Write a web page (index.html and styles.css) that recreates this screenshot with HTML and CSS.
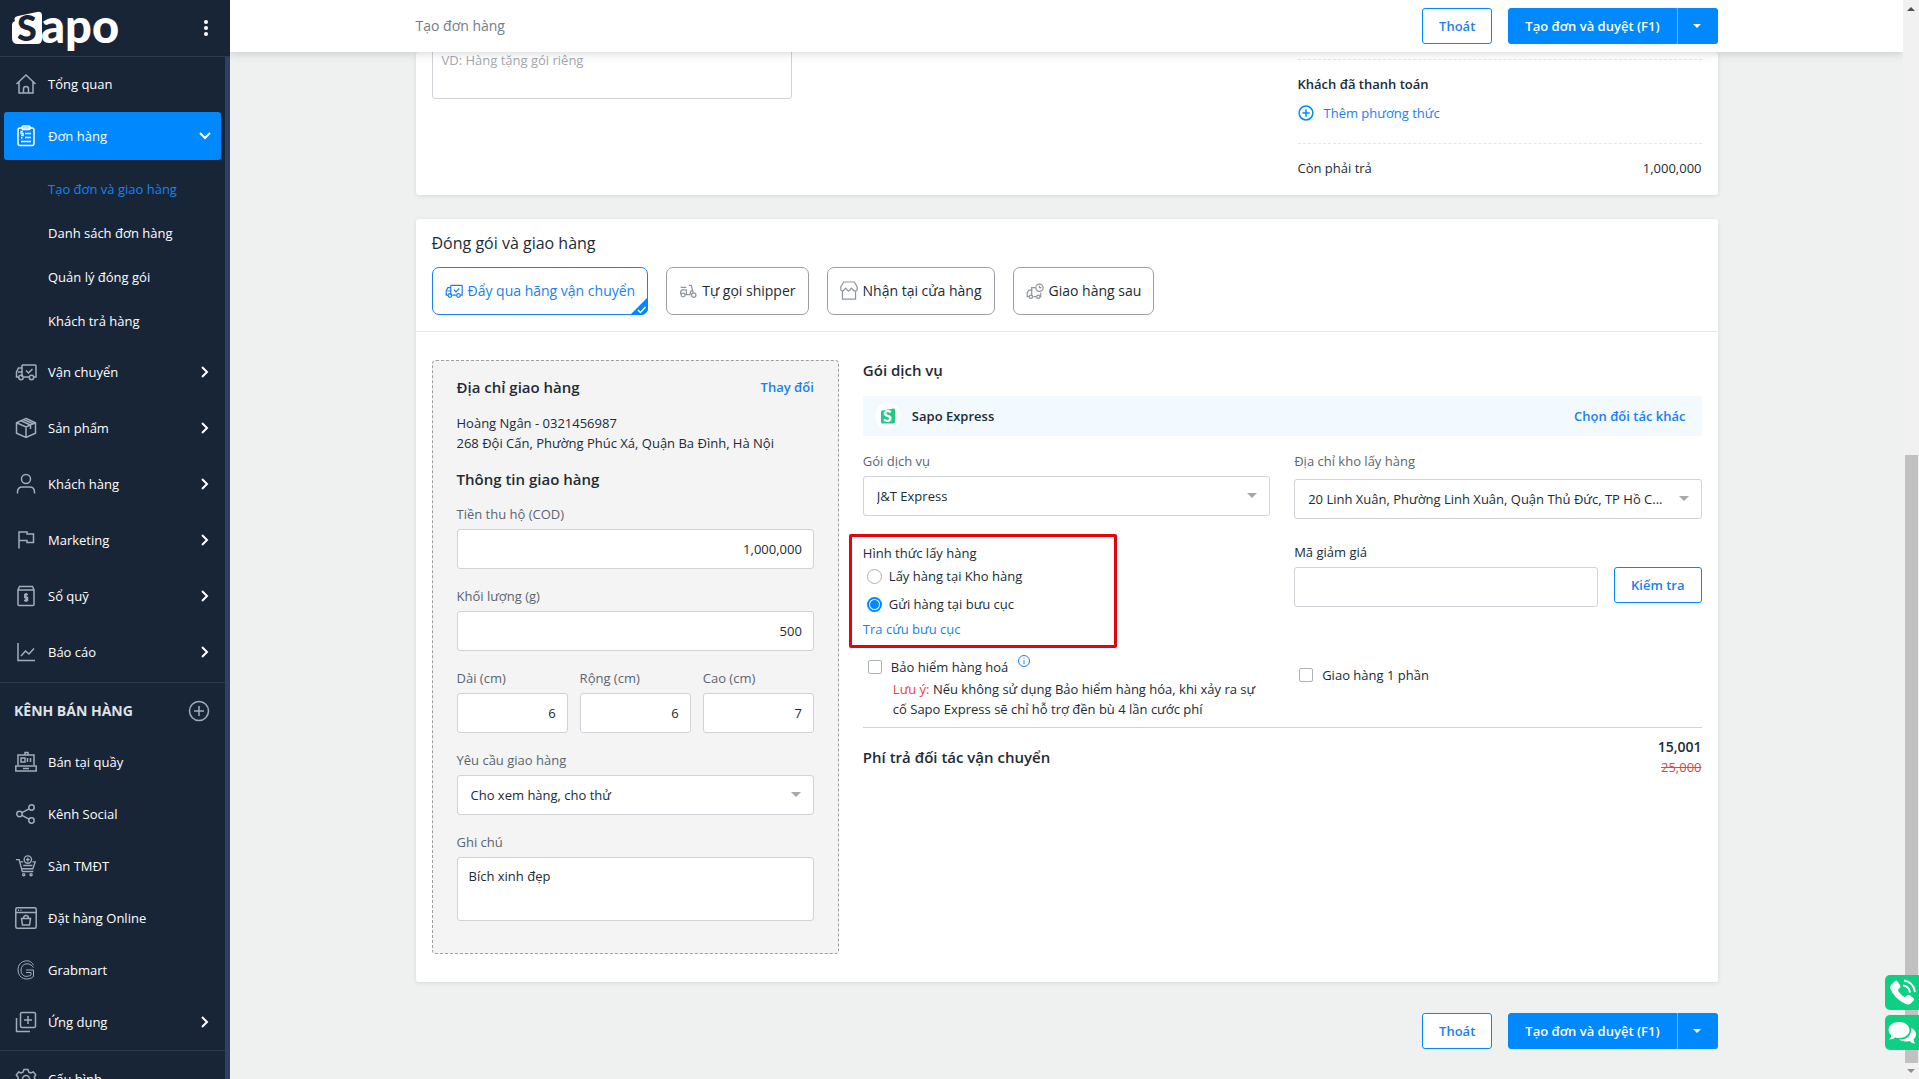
FILE: index.html
```html
<!DOCTYPE html>
<html lang="vi">
<head>
<meta charset="utf-8">
<meta name="viewport" content="width=device-width, initial-scale=1">
<title>Tạo đơn hàng - Sapo</title>
<link rel="stylesheet" href="styles.css">
</head>
<body>
<svg class="sprite" aria-hidden="true">
  <symbol id="truck" viewBox="0 0 22 22"><path d="M7 4h13a1 1 0 0 1 1 1v11h-2M14 16H9M7 4v12M7 7H3.500L1.500 11v5h2.200M3 11h4M11 9.500l2.500 2.500 4-4"/><circle cx="6" cy="16.500" r="2.200"/><circle cx="16.500" cy="16.500" r="2.200"/></symbol>
  <symbol id="chevron" viewBox="0 0 12 12"><path d="M3 1l5 5-5 5"/></symbol>
  <symbol id="plus-circle" viewBox="0 0 22 22"><circle cx="11" cy="11" r="9.500"/><path d="M11 6v10M6 11h10"/></symbol>
</svg>
<div class="app">
  <aside class="sidebar">
    <div class="brand">
      <svg class="logo" viewBox="0 0 110 42" role="img" aria-label="Sapo">
        <path class="logo-box" d="M3 10Q1 6 6 5L25 1Q30 0 30 5V28Q30 33 25 33H6Q0 33 0 27V14Q0 11 3 10Z"/>
        <text class="logo-s" x="5" y="30">S</text>
        <text class="logo-rest" x="29" y="32">apo</text>
      </svg>
      <button class="more" aria-label="Menu"><svg viewBox="0 0 6 18"><circle cx="3" cy="3" r="2"/><circle cx="3" cy="9" r="2"/><circle cx="3" cy="15" r="2"/></svg></button>
    </div>
    <nav class="menu">
      <a class="item" href="#"><svg class="icon" viewBox="0 0 22 22"><path d="M1.500 11L11 2l9.500 9M4 9v11h14V9M8.500 20v-4a2.500 2.500 0 0 1 5 0v4"/></svg>Tổng quan</a>
      <a class="item active" href="#"><svg class="icon" viewBox="0 0 22 22"><rect x="3" y="3" width="16" height="17.500" rx="2"/><rect x="7" y="1" width="8" height="3.500" rx="1"/><path d="M10 8.500h6M10 12.500h6M6 16.500h10M8 6.500H6.200v2H8v2H6M6 13h1.500"/></svg>Đơn hàng<svg class="arrow down"><use href="#chevron"/></svg></a>
      <div class="submenu">
        <a class="current" href="#">Tạo đơn và giao hàng</a>
        <a href="#">Danh sách đơn hàng</a>
        <a href="#">Quản lý đóng gói</a>
        <a href="#">Khách trả hàng</a>
      </div>
      <a class="item tall" href="#"><svg class="icon"><use href="#truck"/></svg>Vận chuyển<svg class="arrow"><use href="#chevron"/></svg></a>
      <a class="item tall" href="#"><svg class="icon" viewBox="0 0 22 22"><path d="M11 1.500l9.500 4.200v10.600L11 20.500l-9.500-4.200V5.700zM1.500 5.700L11 10l9.500-4.300M11 10v10.500M6 3.700L15.500 8v4M8.500 2.600L18 6.800"/></svg>Sản phẩm<svg class="arrow"><use href="#chevron"/></svg></a>
      <a class="item tall" href="#"><svg class="icon" viewBox="0 0 22 22"><circle cx="11" cy="6" r="4.500"/><path d="M2.500 20.500v-1.500c0-3.500 2.500-5 5-5h7c2.500 0 5 1.500 5 5v1.500"/></svg>Khách hàng<svg class="arrow"><use href="#chevron"/></svg></a>
      <a class="item tall" href="#"><svg class="icon" viewBox="0 0 22 22"><path d="M4 19.500V3h8v2h6.500v8.500H12v-2H4"/></svg>Marketing<svg class="arrow"><use href="#chevron"/></svg></a>
      <a class="item tall" href="#"><svg class="icon" viewBox="0 0 22 22"><path d="M3 5v14.500q0 1 1 1h14q1 0 1-1V5zM3 5l1.500-3.500h13L19 5M13 9.500h-3.200v3h2.700v3H9M11 8v9"/></svg>Sổ quỹ<svg class="arrow"><use href="#chevron"/></svg></a>
      <a class="item tall" href="#"><svg class="icon" viewBox="0 0 22 22"><path d="M3 2v17.500h17M6 15l4.500-5 3.500 3 5-5.500"/></svg>Báo cáo<svg class="arrow"><use href="#chevron"/></svg></a>
      <div class="section"><h2>KÊNH BÁN HÀNG</h2><button class="add" aria-label="Thêm kênh"><svg class="icon"><use href="#plus-circle"/></svg></button></div>
      <a class="item" href="#"><svg class="icon" viewBox="0 0 22 22"><path d="M3 14V4h16v10M.800 15h20.400v5H.800zM8 17.500h6M6 7h4v4H6zM12.500 7v4M15.500 7v4M10 1.500h3V4h-3z"/></svg>Bán tại quầy</a>
      <a class="item" href="#"><svg class="icon" viewBox="0 0 22 22"><circle cx="4.500" cy="11" r="2.700"/><circle cx="16.500" cy="4.500" r="2.700"/><circle cx="16.500" cy="17.500" r="2.700"/><path d="M7 9.700l7-3.800M7 12.300l7 3.800"/></svg>Kênh Social</a>
      <a class="item" href="#"><svg class="icon" viewBox="0 0 22 24"><path d="M0 5h3.500L7 18h12M4.500 7.500H8M18 7.500h3L18.500 15H6M8 11.500h10"/><circle cx="13" cy="5" r="4"/><path d="M13 3v4M11 5h4"/><circle cx="8.500" cy="21.500" r="1.200"/><circle cx="16.500" cy="21.500" r="1.200"/></svg>Sàn TMĐT</a>
      <a class="item" href="#"><svg class="icon" viewBox="0 0 22 22"><rect x=".800" y=".800" width="20.400" height="20.400" rx="1.500"/><path d="M1 5.500h20M3 3.200h1M5.500 3.200h1M6.500 11.500h9l-1 6.500h-7zM8.500 11.500c0-4 5-4 5 0"/></svg>Đặt hàng Online</a>
      <a class="item" href="#"><svg class="icon thin" viewBox="0 0 22 22"><path d="M18.500 6C16 1.500 12 1.500 10.500 2 6 2.500 3 6 3 11c0 9 10 11.500 15.500 6.500V11H11M18.500 8.500C15 3 6.500 3.500 6 11c0 7 6 7.500 10 5v-2.500h-5"/></svg>Grabmart</a>
      <a class="item" href="#"><svg class="icon" viewBox="0 0 22 22"><rect x="5.500" y="1.500" width="15" height="15" rx="1.500"/><path d="M13 5v8M9 9h8M1.500 7v13.500H15"/></svg>Ứng dụng<svg class="arrow"><use href="#chevron"/></svg></a>
      <div class="rule"></div>
      <a class="item" href="#"><svg class="icon" viewBox="0 0 22 22"><path d="M9 1.500h4l.800 2.600 2 .900 2.500-1.100 2.400 3-1.300 2.300.600 2.300 1.500 1-1.500 4-3 .300-1.500 1.600-.500 2.600H8l-.800-2.600-2-1.400-3 .300L1 13.500l2-1.800V9.300L1.300 7l2.400-3L6 5l2-.900z"/><circle cx="11" cy="11" r="3.500"/></svg>Cấu hình</a>
    </nav>
  </aside>

  <div class="page">
    <header class="topbar">
      <div class="container bar">
        <h1>Tạo đơn hàng</h1>
        <div class="actions">
          <button class="btn outline">Thoát</button>
          <div class="split"><button class="btn primary">Tạo đơn và duyệt (F1)</button><button class="btn primary caret" aria-label="Thêm lựa chọn"></button></div>
        </div>
      </div>
    </header>

    <main class="container">
      <section class="card summary">
        <textarea class="order-note" aria-label="Ghi chú đơn hàng" placeholder="VD: Hàng tặng gói riêng"></textarea>
        <div class="totals">
          <div class="paid">
            <strong>Khách đã thanh toán</strong>
            <a class="add-method" href="#"><svg class="icon"><use href="#plus-circle"/></svg>Thêm phương thức</a>
          </div>
          <div class="due"><span>Còn phải trả</span><span>1,000,000</span></div>
        </div>
      </section>

      <section class="card shipping">
        <div class="shipping-head">
          <h2>Đóng gói và giao hàng</h2>
          <div class="methods">
            <button class="method selected"><svg class="icon"><use href="#truck"/></svg>Đẩy qua hãng vận chuyển<svg class="corner" viewBox="0 0 18 18"><path class="corner-fill" d="M18 0v18H0z"/><path class="corner-tick" d="M8 13l2.500 2.500L15.500 10"/></svg></button>
            <button class="method"><svg class="icon" viewBox="0 0 22 22"><path d="M2 6.500h7M3 9.500h6v6H7.500M2 15v-2c0-2 1-3.500 3-3.500M9 15.500h4.500c0-3 1.500-5 3-5.500L15 4h-3M16.500 10l1 3"/><circle cx="5" cy="16" r="2.300"/><circle cx="18" cy="16" r="2.700"/></svg>Tự gọi shipper</button>
            <button class="method"><svg class="icon" viewBox="0 0 22 22"><path d="M4.500 0h13L21 6v3q0 2-2.500 2-2 0-2.500-1.500l-2-2-2 2.500-1.500 1L9 10 7 7.500l-2 2Q4.500 11 3 11 1 11 1 9V6zM3 11v10h16V11"/></svg>Nhận tại cửa hàng</button>
            <button class="method"><svg class="icon" viewBox="0 0 22 22"><path d="M11 7H7v10M7 10H3.500l-2 3v5h2M9 18h4M17 18h1v-5"/><circle cx="6" cy="18" r="2"/><circle cx="15" cy="18" r="2"/><circle cx="16.500" cy="7" r="4.500"/><path d="M16.500 4.500V7H19"/></svg>Giao hàng sau</button>
          </div>
        </div>
        <div class="shipping-body">
          <div class="delivery">
            <div class="delivery-head"><h3>Địa chỉ giao hàng</h3><a href="#">Thay đổi</a></div>
            <p class="address">Hoàng Ngân - 0321456987<br>268 Đội Cấn, Phường Phúc Xá, Quận Ba Đình, Hà Nội</p>
            <h3 class="info-title">Thông tin giao hàng</h3>
            <div class="fields">
              <div class="field"><label for="cod">Tiền thu hộ (COD)</label><input id="cod" class="control number" value="1,000,000"></div>
              <div class="field"><label for="weight">Khối lượng (g)</label><input id="weight" class="control number" value="500"></div>
              <div class="sizes">
                <div class="field"><label for="len">Dài (cm)</label><input id="len" class="control number" value="6"></div>
                <div class="field"><label for="wid">Rộng (cm)</label><input id="wid" class="control number" value="6"></div>
                <div class="field"><label for="hei">Cao (cm)</label><input id="hei" class="control number" value="7"></div>
              </div>
              <div class="field"><label for="req">Yêu cầu giao hàng</label><div class="select"><select id="req" class="control"><option>Cho xem hàng, cho thử</option></select></div></div>
              <div class="field"><label for="note">Ghi chú</label><textarea id="note" class="control note">Bích xinh đẹp</textarea></div>
            </div>
          </div>

          <div class="service">
            <h3>Gói dịch vụ</h3>
            <div class="partner">
              <span class="partner-logo"><svg viewBox="0 0 14 16" aria-hidden="true"><path d="M1 2.500L13 .500q1 0 1 1V14q0 1.500-1.500 1.500h-11Q0 15.500 0 14V4q0-1.200 1-1.500z"/><text x="2" y="14">S</text></svg></span>
              <strong>Sapo Express</strong><a href="#">Chọn đối tác khác</a>
            </div>
            <div class="columns">
              <div class="left">
                <div class="field"><label for="pack">Gói dịch vụ</label><div class="select"><select id="pack" class="control"><option>J&amp;T Express</option></select></div></div>
                <fieldset class="pickup">
                  <legend>Hình thức lấy hàng</legend>
                  <label class="choice"><input type="radio" name="pickup">Lấy hàng tại Kho hàng</label>
                  <label class="choice"><input type="radio" name="pickup" checked>Gửi hàng tại bưu cục</label>
                  <a href="#">Tra cứu bưu cục</a>
                </fieldset>
                <label class="choice tick"><input type="checkbox">Bảo hiểm hàng hoá<svg class="info" viewBox="0 0 14 14"><circle cx="7" cy="7" r="5.500"/><path d="M7 6v4M7 3.700v1"/></svg></label>
                <p class="hint"><em>Lưu ý:</em> Nếu không sử dụng Bảo hiểm hàng hóa, khi xảy ra sự cố Sapo Express sẽ chỉ hỗ trợ đền bù 4 lần cước phí</p>
              </div>
              <div class="right">
                <div class="field warehouse"><label for="stock">Địa chỉ kho lấy hàng</label><div class="select"><select id="stock" class="control"><option>20 Linh Xuân, Phường Linh Xuân, Quận Thủ Đức, TP Hồ C...</option></select></div></div>
                <div class="field coupon"><label for="code">Mã giảm giá</label><div class="coupon-row"><input id="code" class="control"><button class="btn outline">Kiểm tra</button></div></div>
                <label class="choice tick partial"><input type="checkbox">Giao hàng 1 phần</label>
              </div>
            </div>
            <div class="fee"><h3>Phí trả đối tác vận chuyển</h3><div class="amounts"><strong>15,001</strong><del>25,000</del></div></div>
          </div>
        </div>
      </section>

      <div class="actions bottom">
        <button class="btn outline">Thoát</button>
        <div class="split"><button class="btn primary">Tạo đơn và duyệt (F1)</button><button class="btn primary caret" aria-label="Thêm lựa chọn"></button></div>
      </div>
    </main>
  </div>
  <div class="scrollbar" aria-hidden="true"><i class="up"></i><i class="thumb"></i><i class="dn"></i></div>
</div>
<div class="contact">
  <button aria-label="Gọi điện"><svg viewBox="0 0 28 28"><path class="solid" d="M4 5l3-3q1.500-1 2.600.500l2.600 4q.800 1.500-.700 2.800L9.800 11q2.500 5 7.200 7.300l1.800-1.700q1.300-1.300 2.800-.400l3.800 2.700q1.500 1.200.300 2.600l-3 3q-2 2-6 0Q6 19 2.500 10 1.500 7 4 5z"/><path d="M15 6.500q6 .500 7 7M16 1.500q9.500 1.500 11 11.500"/></svg></button>
  <button aria-label="Trò chuyện"><svg viewBox="0 0 28 28"><path class="solid" d="M11 3c6 0 10.500 3.300 10.500 8S17 19 11 19q-2 0-3.800-.600Q5 20.500 1 20.500q2.500-2 2.300-4Q.500 14 .500 11C.500 6.300 5 3 11 3zM23.500 9q4.500 2.500 4.500 6.500 0 3-2.500 5 0 2 2 4-4 0-6-2.500-6.500 1.500-10.500-1.500 12 .500 12.500-11.500z"/></svg></button>
</div>
</body>
</html>
```

FILE: styles.css
```css
* { box-sizing: border-box; }
body {
  margin: 0;
  background: #eff1f1;
  color: #212b36;
  font: 13px/20px "Open Sans", "Noto Sans", sans-serif;
}
h1, h2, h3, p { margin: 0; }
h3 { font-size: 15px; font-weight: 600; }
a { color: #1a7ff0; text-decoration: none; }
button, input, select, textarea { font: inherit; color: inherit; }
button { cursor: pointer; }
strong { font-weight: 600; }
.sprite { position: absolute; width: 0; height: 0; }
.icon { flex: none; width: 22px; height: 22px; fill: none; stroke: #a3adb9; stroke-width: 1.5; overflow: visible; }
.thin { stroke-width: 1; }

.app { display: flex; height: 100vh; overflow: hidden; }

/* sidebar */
.sidebar { flex: none; width: 230px; background: #182537; display: flex; flex-direction: column; }
.brand { flex: none; display: flex; justify-content: space-between; align-items: center; height: 57px; padding: 0 19px 0 12px; border-bottom: 1px solid #2c3a4d; }
.logo { width: 110px; height: 42px; margin-top: 8px; fill: #fff; font-family: Lato, sans-serif; font-weight: 900; overflow: visible; }
.logo-s { fill: #182537; font-size: 36px; }
.logo-rest { font-size: 47px; }
.more { width: 10px; height: 20px; padding: 0; border: 0; background: none; }
.more svg { display: block; width: 6px; height: 18px; margin: 0 auto; fill: #fff; }
.menu { flex: 1; min-height: 0; overflow: hidden; padding-top: 3px; border-right: 5px solid #2f4160; color: #fff; }
.item { display: flex; align-items: center; gap: 11px; height: 48px; margin: 0 4px 4px; padding: 0 10px 0 11px; border-radius: 3px; color: #fff; }
.item.tall { height: 56px; margin-bottom: 0; }
.active { background: #08f; }
.active .icon { stroke: #fff; }
.arrow { width: 12px; height: 12px; margin-left: auto; fill: none; stroke: #fff; stroke-width: 2; overflow: visible; }
.arrow.down { transform: rotate(90deg); }
.submenu { padding: 3px 0 1px; }
.submenu a { display: block; padding: 12px 0 12px 48px; color: #fff; }
.submenu .current { color: #1683f5; }
.section { display: flex; align-items: center; justify-content: space-between; height: 56px; margin-top: 2px; padding: 0 15px 0 14px; border-top: 1px solid #2c3a4d; }
.section h2 { font-size: 14px; font-weight: 700; color: #dfe3e8; }
.add { width: 22px; height: 22px; padding: 0; border: 0; background: none; }
.rule { border-top: 1px solid #2c3a4d; margin-bottom: 4px; }

/* page frame */
.page { flex: 1; min-width: 0; overflow: hidden; }
.container { max-width: 1334px; margin: 0 auto; padding: 0 16px; }
.topbar { position: relative; z-index: 2; background: #fff; box-shadow: 0 2px 8px rgba(0, 0, 0, .15); }
.bar { display: flex; align-items: center; justify-content: space-between; height: 52px; }
.bar h1 { font-size: 14px; font-weight: 500; color: #747c87; }
.actions { display: flex; justify-content: flex-end; gap: 16px; }
.btn { height: 36px; padding: 0 16px; border: 1px solid #08f; border-radius: 3px; font-weight: 600; white-space: nowrap; }
.outline { background: #fff; color: #1a7ff0; }
.primary { background: #08f; color: #fff; }
.split { display: flex; }
.split .btn:first-child { border-radius: 3px 0 0 3px; }
.split .caret { width: 41px; border-left-color: #6bb9ff; border-radius: 0 3px 3px 0; display: flex; align-items: center; justify-content: center; }
.caret::after { content: ""; border: 4px solid transparent; border-top-color: currentColor; border-bottom: 0; }
.bottom { margin-top: 31px; }

.card { background: #fff; border-radius: 3px; box-shadow: 0 1px 4px rgba(0, 0, 0, .1); }

/* order summary */
.summary { display: flex; justify-content: space-between; padding: 7px 16px 17px; margin-bottom: 24px; }
.order-note { width: 360px; height: 64px; margin-top: -24px; padding: 14px 9px; border: 1px solid #cfd3d7; border-radius: 3px; resize: none; }
.order-note::placeholder { color: #a0a7b0; }
.totals { width: 404px; }
.paid { display: flex; flex-direction: column; gap: 9px; padding: 14px 0 20px; border: dashed #e3e5e8; border-width: 1px 0; }
.add-method { display: flex; align-items: center; gap: 10px; }
.add-method .icon { width: 16px; height: 16px; stroke: #08f; stroke-width: 2; }
.due { display: flex; justify-content: space-between; padding-top: 14px; }

/* shipping */
.shipping-head { padding: 12px 16px 16px; border-bottom: 1px solid #e4e6e8; }
.shipping-head h2 { margin-bottom: 12px; font-size: 16px; line-height: 24px; font-weight: 400; }
.methods { display: flex; flex-wrap: wrap; gap: 18px; }
.method { position: relative; display: flex; align-items: center; gap: 5px; height: 48px; padding: 0 12px; border: 1px solid #9a9fa5; border-radius: 7px; background: #fff; font-size: 14px; font-weight: 500; }
.method .icon { width: 18px; height: 18px; stroke: #8f959c; }
.method.selected { border-color: #1a7ff0; color: #1a7ff0; }
.selected .icon { stroke: #1a7ff0; }
.corner { position: absolute; right: -1px; bottom: -1px; width: 18px; height: 18px; border-bottom-right-radius: 7px; }
.corner-fill { fill: #08f; }
.corner-tick { fill: none; stroke: #fff; stroke-width: 1.5; }
.shipping-body { display: grid; grid-template-columns: 17fr 35fr; gap: 24px; padding: 28px 16px; }

.delivery { padding: 14px 24px 32px; border: 1px dashed #9a9fa5; border-radius: 4px; background: #f4f4f4; }
.delivery-head { display: flex; justify-content: space-between; line-height: 24px; }
.delivery-head a, .partner a { font-weight: 600; }
.address { margin: 14px 0; }
.info-title { margin-bottom: 13px; line-height: 24px; }
.fields { display: grid; gap: 17px; }
.sizes { display: grid; grid-template-columns: repeat(3, minmax(0, 1fr)); gap: 12px; }
.field { display: flex; flex-direction: column; gap: 5px; }
.field label { color: #5b6572; }
.control { width: 100%; height: 40px; padding: 0 11px; border: 1px solid #cfd3d7; border-radius: 3px; background: #fff; }
.number { text-align: right; }
.note { display: block; height: 64px; padding: 8px 11px; resize: none; }
.select { position: relative; }
.select select { appearance: none; padding: 0 24px 0 13px; }
.select::after { content: ""; position: absolute; right: 13px; top: 17px; border: 5px solid transparent; border-top-color: #a5a9ae; border-bottom: 0; pointer-events: none; }

.partner { display: flex; align-items: center; gap: 11px; height: 40px; margin: 16px 0 15px; padding: 0 16px 0 12px; background: #f2f9ff; }
.partner a { margin-left: auto; }
.partner-logo { display: grid; place-items: center; width: 26px; height: 26px; border-radius: 50%; background: #fff; }
.partner-logo svg { width: 14px; height: 16px; fill: #1fc98b; overflow: visible; }
.partner-logo text { fill: #fff; font: 900 16px Lato, sans-serif; }
.columns { display: grid; grid-template-columns: repeat(2, minmax(0, 1fr)); gap: 24px; padding-bottom: 8px; border-bottom: 1px solid #cfd3d7; }
.pickup { display: flex; flex-direction: column; gap: 8px; width: 268px; margin: 18px 0 9px -14px; padding: 6px 11px; border: 3px solid #e3050b; border-radius: 2px; }
.pickup legend { float: left; padding: 0; margin-bottom: -5px; }
.pickup a { margin-top: -3px; }
.choice { display: flex; align-items: center; gap: 7px; padding-left: 4px; }
.choice input { flex: none; appearance: none; width: 15px; height: 15px; margin: 0; border: 1px solid #adb2b8; border-radius: 50%; background: #fff; }
.choice input:checked { border: 2px solid #08f; background: radial-gradient(circle, #08f 4px, #fff 5px); }
.tick { gap: 9px; padding-left: 5px; }
.tick input { width: 14px; height: 14px; border-radius: 2px; }
.info { align-self: flex-start; width: 14px; height: 14px; margin-top: -3px; fill: none; stroke: #1a7ff0; }
.hint { margin-top: 2px; padding-left: 30px; }
.hint em { font-style: normal; color: #e8443a; }
.warehouse { gap: 8px; margin-bottom: 23px; }
.coupon label { color: inherit; }
.coupon-row { display: flex; gap: 16px; }
.coupon-row .control { flex: 1; min-width: 0; }
.partial { margin-top: 58px; }
.fee { display: flex; align-items: center; justify-content: space-between; padding-top: 9px; }
.amounts { display: flex; flex-direction: column; align-items: flex-end; }
.amounts strong { font-size: 14px; }
.amounts del { color: #e0483e; }

/* window scrollbar */
.scrollbar { flex: none; display: flex; flex-direction: column; align-items: center; width: 16px; padding: 7px 0 6px; background: #f1f1f1; }
.scrollbar .up { border: 4px solid transparent; border-bottom-color: #505050; border-top: 0; }
.scrollbar .dn { border: 4px solid transparent; border-top-color: #909090; border-bottom: 0; margin-top: 6px; }
.scrollbar .thumb { width: 13px; height: 57%; margin-top: auto; background: #c1c1c1; }

.contact { position: fixed; right: 0; bottom: 29px; z-index: 3; display: flex; flex-direction: column; gap: 5px; }
.contact button { display: flex; width: 34px; height: 35px; padding: 4px 3px; border: 0; border-radius: 5px 0 0 5px; background: #0fcf83; }
.contact svg { width: 28px; height: 28px; fill: none; stroke: #fff; stroke-width: 2; overflow: visible; }
.contact .solid { fill: #fff; stroke: none; }
```
